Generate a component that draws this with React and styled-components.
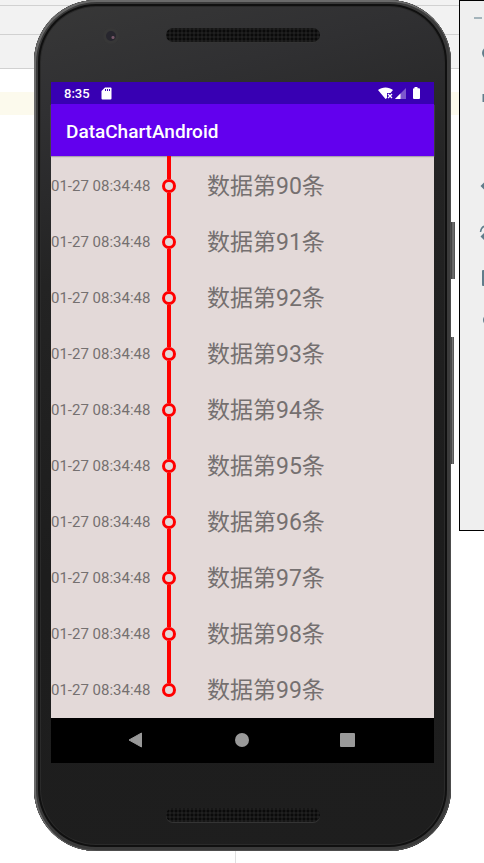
import React from "react";
import styled, { createGlobalStyle } from "styled-components";

const Global = createGlobalStyle`
  * { box-sizing: border-box; }
  body { margin: 0; background: #fff; font-family: Roboto, "Noto Sans CJK SC", sans-serif; }
  button { border: 0; padding: 0; background: none; display: flex; align-items: center; justify-content: center; }
  svg { display: block; flex: none; }
`;

const Page = styled.div`
  display: grid;
  min-height: 100vh;
  grid-template-columns: minmax(0, 1fr);
  overflow: hidden;
`;

const Editor = styled.div`
  grid-area: 1 / 1;
  display: flex;
  flex-direction: column;
`;

const EditorBar = styled.div`
  height: ${(p) => p.$height}px;
  flex: none;
  background: #f2f2f2;
  border-bottom: 1px solid #d1d1d1;
`;

const ActiveLine = styled.div`
  height: 23px;
  flex: none;
  margin-top: 23px;
  background: #fcfaed;
`;

const TextMargin = styled.div`
  flex: 1;
  width: 236px;
  border-right: 1px solid #e0e0e0;
`;

const Emulator = styled.main`
  grid-area: 1 / 1;
  display: flex;
  align-items: flex-start;
  padding-left: 34px;
`;

const Phone = styled.section`
  flex: 1;
  min-width: 0;
  display: flex;
  flex-direction: column;
  padding: 0 17px;
  border-radius: 62px;
  background: linear-gradient(165deg, #383838 0%, #303032 12%, #232323 30%, #1d1d1d 60%, #1e1e1e 100%);
  box-shadow: inset 1px 1px 0 1px #6a6a6a, inset 0 0 0 1px #4c4c4c, inset 0 0 0 4px #3a3a3a, inset 0 0 0 6px #101010,
    inset 0 0 0 7px #2a2a2a;
`;

const Forehead = styled.div`
  height: 82px;
  display: grid;
  grid-template-columns: 1fr 154px 1fr;
  align-items: start;
  padding-top: 28px;
`;

const Camera = styled.div`
  justify-self: center;
  width: 16px;
  height: 16px;
  margin-left: 6px;
  border-radius: 50%;
  border: 3px solid #373737;
  background: radial-gradient(circle at 70% 65%, #79586a 0 1px, #27262e 2px 5px);
`;

const Chin = styled.div`
  height: 88px;
  display: flex;
  justify-content: center;
  align-items: flex-start;
  padding-top: 45px;
`;

const Speaker = styled.div`
  width: 154px;
  height: 14px;
  border-radius: 7px;
  background: radial-gradient(circle, #0a0a0a 1px, transparent 2px) 0 1px / 4px 4px #1f1f1f;
  box-shadow: 0 1px 0 #343434;
`;

const Screen = styled.div`
  display: flex;
  flex-direction: column;
  background: #e3d9d8;
`;

const StatusBar = styled.div`
  height: 22px;
  display: flex;
  align-items: center;
  padding: 0 13px;
  background: #3800b3;
  color: #fff;
  font-size: 13px;
  font-weight: 500;
`;

const Clock = styled.time`
  flex: none;
  margin-right: 11px;
`;

const StatusIcons = styled.div`
  display: flex;
  align-items: center;
  margin-left: auto;
`;

const AppBar = styled.header`
  height: 52px;
  display: flex;
  align-items: center;
  padding: 2px 15px 0;
  background: #6200ee;
  box-shadow: 0 1px 1px #aaa2b0;
`;

const Title = styled.h1`
  margin: 0;
  color: #fff;
  font-size: 19px;
  font-weight: 500;
`;

const Timeline = styled.ol`
  list-style: none;
  margin: 0;
  padding: 0 0 2px;
`;

const Entry = styled.li`
  height: 56px;
  display: grid;
  grid-template-columns: 111px 14px 1fr;
  align-items: center;
  color: #757070;
`;

const Stamp = styled.time`
  font-size: 15px;
  line-height: 20px;
  padding-top: 4px;
  white-space: nowrap;
`;

const Rail = styled.span`
  height: 100%;
  display: grid;
  grid-template-rows: 23px 14px 1fr;
  justify-items: center;
`;

const Segment = styled.span`
  width: 4px;
  background: #ff0000;
`;

const Dot = styled.span`
  width: 14px;
  height: 14px;
  border: 3px solid #ff0000;
  border-radius: 50%;
`;

const Label = styled.span`
  padding: 6px 0 0 31px;
  font-size: 23px;
  line-height: 32px;
  white-space: nowrap;
`;

const NavBar = styled.nav`
  height: 45px;
  display: grid;
  grid-template-columns: repeat(3, 106px);
  justify-content: center;
  padding: 0 2px 1px 0;
  background: #000;
`;

const SideKeys = styled.div`
  width: 8px;
  flex: none;
  padding-top: 222px;
  display: flex;
  flex-direction: column;
  gap: 58px;
`;

const SideKey = styled.span`
  width: ${(p) => p.$width}px;
  height: ${(p) => p.$height}px;
  background: linear-gradient(90deg, #333, #777, #484848);
`;

const ToolPanel = styled.aside`
  width: 25px;
  height: 531px;
  flex: none;
  overflow: hidden;
  display: flex;
  flex-direction: column;
  gap: 38px;
  border: 1px solid #000;
  border-right: 0;
  background: #efefef;
`;

const ToolGroup = styled.div`
  display: flex;
  flex-direction: column;
`;

const ToolButton = styled.button`
  && {
    width: 50px;
    height: ${(p) => p.$height}px;
    padding-left: 12px;
    color: #607d8b;
    justify-content: flex-start;
  }
`;

const windowTools = [
  { name: "Minimize", height: 34, art: <path d="M2 12h8" stroke="#a4b4bb" strokeWidth="2" /> },
  { name: "Power", height: 36, art: <circle cx="16" cy="12" r="5" stroke="currentColor" strokeWidth="2" fill="none" /> },
  { name: "Volume", height: 54, art: <path d="M10.500 8h4l5-4v16l-5-4h-4z" fill="currentColor" /> },
];

const deviceTools = [
  { name: "Back", height: 46, art: <path d="M8.500 12 13 7.500 17.500 12 13 16.500z" fill="currentColor" /> },
  {
    name: "Rotate",
    height: 48,
    art: (
      <>
        <path d="M8.500 11C9 7 11 5 14 5" stroke="currentColor" strokeWidth="1.500" fill="none" />
        <path d="M8.500 15.500 12 12l3.500 3.500L12 19z" fill="currentColor" />
      </>
    ),
  },
  { name: "Screenshot", height: 42, art: <rect x="10" y="4" width="14" height="16" rx="1" fill="currentColor" /> },
  { name: "Zoom", height: 42, art: <circle cx="17" cy="12" r="5" stroke="currentColor" strokeWidth="2" fill="none" /> },
];

const navKeys = [
  { name: "Back", art: <path d="M4 11 16.500 4v14z" strokeLinejoin="round" stroke="#999" /> },
  { name: "Home", art: <circle cx="11" cy="11" r="7" /> },
  { name: "Overview", art: <rect x="3" y="4" width="15" height="14" rx="1" /> },
];

const entries = Array.from({ length: 10 }, (_, i) => ({
  id: 90 + i,
  time: "01-27 08:34:48",
  label: `数据第${90 + i}条`,
}));

function Tools({ items }) {
  return (
    <ToolGroup>
      {items.map((tool) => (
        <ToolButton key={tool.name} type="button" aria-label={tool.name} $height={tool.height}>
          <svg width="24" height="24" viewBox="0 0 24 24" fill="none">
            {tool.art}
          </svg>
        </ToolButton>
      ))}
    </ToolGroup>
  );
}

function Status() {
  return (
    <StatusBar>
      <Clock>8:35</Clock>
      <svg width="11" height="13" viewBox="0 0 11 13">
        <path d="M4 .5h5.500a1 1 0 0 1 1 1v10a1 1 0 0 1-1 1h-8a1 1 0 0 1-1-1V4z" fill="#fff" />
        <path d="M4.500 2v2M6.500 2v2M8.500 2v2" stroke="#3800b3" />
      </svg>
      <StatusIcons>
        <svg width="43" height="14" viewBox="0 0 43 14">
          <path d="M0 4C4 .5 11 .5 15 4L12.500 7H9v5L7.500 13z" fill="#fff" />
          <path d="m10 8 4 4m0-4-4 4" stroke="#fff" strokeWidth="1.300" />
          <path d="M28 2v11H17z" fill="#7d57cd" />
          <path d="M22.500 7.500V13H17z" fill="#fff" />
          <path d="M36.500 1h3v1.200H41a1 1 0 0 1 1 1V12a1 1 0 0 1-1 1h-5a1 1 0 0 1-1-1V3.200a1 1 0 0 1 1-1h.5z" fill="#fff" />
        </svg>
      </StatusIcons>
    </StatusBar>
  );
}

export default function App() {
  return (
    <>
      <Global />
      <Page>
        <Editor>
          <EditorBar $height={6} />
          <EditorBar $height={29} />
          <EditorBar $height={34} />
          <ActiveLine />
          <TextMargin />
        </Editor>
        <Emulator>
          <Phone>
            <Forehead>
              <Camera />
              <Speaker />
            </Forehead>
            <Screen>
              <Status />
              <AppBar>
                <Title>DataChartAndroid</Title>
              </AppBar>
              <Timeline>
                {entries.map((entry, i) => (
                  <Entry key={entry.id}>
                    <Stamp>{entry.time}</Stamp>
                    <Rail>
                      <Segment />
                      <Dot />
                      {i < entries.length - 1 && <Segment />}
                    </Rail>
                    <Label>{entry.label}</Label>
                  </Entry>
                ))}
              </Timeline>
              <NavBar>
                {navKeys.map((key) => (
                  <button key={key.name} type="button" aria-label={key.name}>
                    <svg width="22" height="22" viewBox="0 0 22 22" fill="#999">
                      {key.art}
                    </svg>
                  </button>
                ))}
              </NavBar>
            </Screen>
            <Chin>
              <Speaker />
            </Chin>
          </Phone>
          <SideKeys>
            <SideKey $width={4} $height={57} />
            <SideKey $width={3} $height={127} />
          </SideKeys>
          <ToolPanel>
            <Tools items={windowTools} />
            <Tools items={deviceTools} />
          </ToolPanel>
        </Emulator>
      </Page>
    </>
  );
}
